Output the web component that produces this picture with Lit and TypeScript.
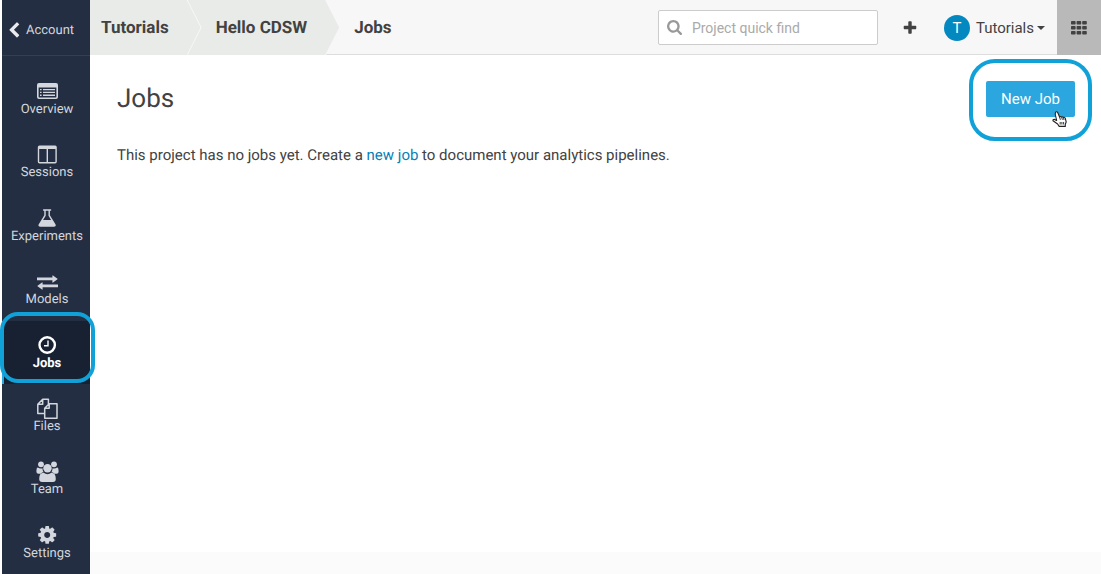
import { LitElement, html, css, svg } from "lit";
import { customElement, property } from "lit/decorators.js";
import { classMap } from "lit/directives/class-map.js";

const COG =
  "M1152 896q0-106-75-181t-181-75-181 75-75 181 75 181 181 75 181-75 75-181zm512-109v222q0 12-8 23t-20 13l-185 28q-19 54-39 91 35 50 107 138 10 12 10 25t-9 23q-27 37-99 108t-94 71q-12 0-26-9l-138-108q-44 23-91 38-16 136-29 186-7 28-36 28h-222q-14 0-24.5-8.5t-11.5-21.5l-28-184q-49-16-90-37l-141 107q-10 9-25 9-14 0-25-11-126-114-165-168-7-10-7-23 0-12 8-23 15-21 51-66.5t54-70.5q-27-50-41-99l-183-27q-13-2-21-12.5t-8-23.5v-222q0-12 8-23t19-13l186-28q14-46 39-92-40-57-107-138-10-12-10-24 0-10 9-23 26-36 98.5-107.5t94.5-71.5q13 0 26 10l138 107q44-23 91-38 16-136 29-186 7-28 36-28h222q14 0 24.5 8.5t11.5 21.5l28 184q49 16 90 37l142-107q9-9 24-9 13 0 25 10 129 119 165 170 7 8 7 22 0 12-8 23-15 21-51 66.5t-54 70.5q26 50 41 98l183 28q13 2 21 12.5t8 23.5z";
const SEARCH =
  "M1216 832q0-185-131.5-316.5t-316.5-131.5-316.5 131.5-131.5 316.5 131.5 316.5 316.5 131.5 316.5-131.5 131.5-316.5zm512 832q0 52-38 90t-90 38q-54 0-90-38l-343-342q-179 124-399 124-143 0-273.5-55.5t-225-150-150-225-55.5-273.5 55.5-273.5 150-225 225-150 273.5-55.5 273.5 55.5 225 150 150 225 55.5 273.5q0 220-124 399l343 343q37 37 37 90z";
const PLUS =
  "M1600 736v192q0 40-28 68t-68 28h-416v416q0 40-28 68t-68 28h-192q-40 0-68-28t-28-68v-416h-416q-40 0-68-28t-28-68v-192q0-40 28-68t68-28h416v-416q0-40 28-68t68-28h192q40 0 68 28t28 68v416h416q40 0 68 28t28 68z";
const CHEVRON =
  "M1427 301l-531 531 531 531q19 19 19 45t-19 45l-166 166q-19 19-45 19t-45-19l-742-742q-19-19-19-45t19-45l742-742q19-19 45-19t45 19l166 166q19 19 19 45t-19 45z";

const icons: Record<string, unknown> = {
  overview: svg`
    <path fill-rule="evenodd" d="M3 3h17q2 0 2 2v12q0 2-2 2H3q-2 0-2-2V5q0-2 2-2zM2.6 7.6v9.2q0 .6.6.6h16.6q.6 0 .6-.6V7.6z"/>
    <path d="M4 8.9h1.6v1.4H4zM7 8.9h12v1.4H7zM4 11.7h1.6v1.4H4zM7 11.7h12v1.4H7zM4 14.5h1.6v1.4H4zM7 14.5h12v1.4H7z"/>`,
  sessions: svg`
    <path fill-rule="evenodd" d="M3.500 2.500h15.600q1.700 0 1.700 1.700v14.600q0 1.700-1.700 1.700H3.500q-1.700 0-1.700-1.700V4.200q0-1.700 1.700-1.700zM3.200 6v12.500q0 .5.5.5h6.900V6zM12 6v13h6.900q.5 0 .5-.5V6z"/>`,
  experiments: svg`
    <path fill-rule="evenodd" d="M7.600 2.300h7q.7 0 .7.700t-.7.700h-.7v4.600l5.400 8.600q.8 1.200.3 2t-1.800.8H4.400q-1.300 0-1.800-.8t.3-2l5.400-8.600V3.700h-.7q-.7 0-.7-.7t.7-.7zM9.700 3.700v5L7.100 13h8l-2.600-4.300v-5z"/>`,
  models: svg`
    <path d="M1 7.600h15.400V5.700q0-.6.600-.3l4.500 3.300q.3.300 0 .6L17 12.600q-.6.300-.6-.3v-2H1zM22 14.600H6.600v-1.900q0-.6-.6-.3l-4.500 3.300q-.3.300 0 .6L6 19.600q.6.300.6-.3v-2H22z"/>`,
  jobs: svg`
    <circle cx="11.200" cy="11" r="7.700" fill="none" stroke="currentColor" stroke-width="2.400"/>
    <path d="M11.300 6.500h1.400v5.900H8V11h3.300z"/>`,
  files: svg`
    <path fill="none" stroke="currentColor" stroke-width="1.500" stroke-linejoin="round"
      d="M8.500 16.600H1.800V7.200l4.900-4.900h5.700v4.200M6.700 2.300v4.900H1.800M8.700 11.300l4.500-4.500h7.800v14.400H8.700zM13.200 6.800v4.500H8.700M12.400 2.300v4.900"/>`,
  team: svg`
    <circle cx="5" cy="4.300" r="2.900"/><circle cx="18" cy="4.300" r="2.900"/><circle cx="11.500" cy="8.300" r="4.200"/>
    <path d="M1.800 7.500q1.500 1 3.200 1 .9 0 1.500-.3-.2 2.300 1 4.100-1.500 0-2.700 1.400H2.500Q.4 13.600.4 11.800q0-4.300 1.400-4.300zM21.200 7.500q-1.500 1-3.200 1-.9 0-1.500-.3.200 2.300-1 4.100 1.500 0 2.700 1.400h2.300q2.100-.1 2.100-1.900 0-4.300-1.400-4.300z"/>
    <path d="M7.600 12.800q1.800 1.400 3.900 1.400t3.900-1.400q4.400 0 4.400 6.200 0 2.900-2.900 2.900H6.100q-2.900 0-2.900-2.900 0-6.200 4.400-6.200z"/>`,
  settings: svg`<path transform="translate(.7 .4) scale(.0117)" d="${COG}"/>`,
};

@customElement("side-nav-item")
class SideNavItem extends LitElement {
  @property() label = "";
  @property() icon = "";
  @property({ type: Boolean, reflect: true }) active = false;

  static styles = css`
    :host {
      display: block;
      flex: 1 0 63px;
      position: relative;
    }
    .link {
      box-sizing: border-box;
      height: 100%;
      padding-top: 13px;
      border-left: 2px solid transparent;
      display: flex;
      flex-direction: column;
      align-items: center;
      color: #d3d6dc;
      font-size: 13px;
      line-height: 16px;
      text-decoration: none;
    }
    .icon {
      width: 22px;
      height: 22px;
      overflow: visible;
      fill: currentColor;
    }
    .active {
      color: #fff;
      font-weight: 700;
      background: #182132;
      border-left-color: #29a7df;
    }
    .ring {
      position: absolute;
      inset: -9px -5px 1px -2px;
      border: 4px solid #0fa1d8;
      border-radius: 18px;
      pointer-events: none;
    }
  `;

  render() {
    return html`
      <a class=${classMap({ link: true, active: this.active })} href="#${this.icon}"
        aria-current=${this.active ? "page" : "false"}>
        <svg class="icon" viewBox="0 0 22 22" aria-hidden="true">${icons[this.icon]}</svg>
        <span>${this.label}</span>
      </a>
      ${this.active ? html`<div class="ring"></div>` : ""}
    `;
  }
}

@customElement("app-root")
class AppRoot extends LitElement {
  private items = ["Overview", "Sessions", "Experiments", "Models", "Jobs", "Files", "Team", "Settings"];

  static styles = css`
    :host {
      box-sizing: border-box;
      display: grid;
      grid-template-columns: 88px 1fr;
      min-height: 100vh;
      padding-left: 2px;
      background: #fff;
      color: #424242;
      font-family: Roboto, "Liberation Sans", sans-serif;
      font-size: 15px;
      text-rendering: geometricPrecision;
    }
    .sidebar {
      display: flex;
      flex-direction: column;
      background: #242e43;
      z-index: 1;
    }
    .account {
      box-sizing: border-box;
      height: 56px;
      padding: 5px 0 0 6px;
      display: flex;
      align-items: center;
      gap: 6px;
      border-bottom: 1px solid #353e52;
      color: #d3d6dc;
      font-size: 13px;
      text-decoration: none;
    }
    .account svg {
      width: 12px;
      height: 16px;
      fill: #e8eaee;
    }
    .nav {
      flex: 1;
      margin-top: 11px;
      display: flex;
      flex-direction: column;
    }
    .page {
      display: flex;
      flex-direction: column;
      min-width: 0;
    }
    .topbar {
      height: 55px;
      display: flex;
      align-items: center;
      background: linear-gradient(#ddd, #ddd) bottom / 100% 1px no-repeat #f7f7f7;
    }
    .crumbs {
      display: flex;
      height: 100%;
      margin: 0;
      padding: 0;
      list-style: none;
      flex: 1;
    }
    .crumb {
      display: flex;
      align-items: center;
      padding: 0 33px 0 28px;
      margin-left: -14px;
      position: relative;
      isolation: isolate;
      font-size: 17px;
      font-weight: 700;
    }
    .crumb:first-child {
      margin-left: 0;
      padding-left: 11px;
      z-index: 1;
    }
    .crumb.step,
    .crumb.step::before {
      clip-path: polygon(0 0, calc(100% - 14px) 0, 100% 50%, calc(100% - 14px) 100%, 0 100%);
    }
    .crumb.step {
      background: #f7f7f7;
    }
    .crumb.step::before {
      content: "";
      position: absolute;
      inset: 0 1px 0 0;
      background: #e9ebe8;
      z-index: -1;
    }
    .crumb a,
    .crumb span {
      color: inherit;
      text-decoration: none;
    }
    .search {
      box-sizing: border-box;
      width: 220px;
      height: 35px;
      display: flex;
      align-items: center;
      gap: 10px;
      padding: 0 8px;
      background: #fff;
      border: 1px solid #ccc;
      border-radius: 2px;
    }
    .search svg {
      width: 15px;
      height: 15px;
      flex: none;
      fill: #999;
    }
    .search input {
      flex: 1;
      min-width: 0;
      border: 0;
      padding: 0;
      outline: 0;
      background: none;
      font: 14px Roboto, sans-serif;
      color: #424242;
    }
    .search input::placeholder {
      color: #aaa;
      opacity: 1;
    }
    button {
      border: 0;
      margin: 0;
      padding: 0;
      background: none;
      font: inherit;
      color: inherit;
      cursor: pointer;
    }
    .add {
      display: flex;
      margin: 0 26px 0 24px;
    }
    .add svg {
      width: 16px;
      height: 16px;
      fill: #424242;
    }
    .user {
      display: flex;
      align-items: center;
    }
    .avatar {
      width: 26px;
      height: 26px;
      margin-right: 6px;
      border-radius: 50%;
      background: #0488c0;
      color: #fff;
      line-height: 26px;
      text-align: center;
    }
    .caret {
      margin-left: 3px;
      border: 4px solid transparent;
      border-top-color: #424242;
      border-bottom: 0;
    }
    .apps {
      width: 44px;
      height: 55px;
      margin-left: 12px;
      display: grid;
      place-items: center;
      background: #b9b9b9;
    }
    .apps svg {
      width: 16px;
      height: 14px;
      fill: #424242;
    }
    .content {
      flex: 1;
      padding: 26px 26px 0 27px;
    }
    .heading {
      display: flex;
      align-items: center;
      justify-content: space-between;
    }
    h1 {
      margin: 0;
      font-size: 26px;
      line-height: 36px;
      font-weight: 400;
    }
    p {
      margin: 28px 0 0;
      line-height: 20px;
    }
    p a {
      color: #0a7fb5;
      text-decoration: none;
    }
    .action {
      position: relative;
    }
    .new {
      height: 36px;
      padding: 0 15px;
      border-radius: 2px;
      background: #2ba6df;
      color: #fff;
    }
    .ring {
      position: absolute;
      inset: -22px -17px -24px;
      border: 4px solid #0fa1d8;
      border-radius: 26px;
      pointer-events: none;
    }
    .pointer {
      position: absolute;
      right: 8px;
      bottom: -11px;
      width: 15px;
      height: 17px;
      pointer-events: none;
    }
    .footer {
      height: 22px;
      background: #fbfbfb;
    }
  `;

  render() {
    return html`
      <aside class="sidebar">
        <a class="account" href="#account">
          <svg viewBox="300 0 1200 1700" aria-hidden="true"><path d=${CHEVRON} /></svg>
          <span>Account</span>
        </a>
        <nav class="nav" aria-label="Project">
          ${this.items.map(
            (label) => html`<side-nav-item label=${label} icon=${label.toLowerCase()}
              ?active=${label === "Jobs"}></side-nav-item>`
          )}
        </nav>
      </aside>
      <div class="page">
        <header class="topbar">
          <ol class="crumbs">
            <li class="crumb step"><a href="#tutorials">Tutorials</a></li>
            <li class="crumb step"><a href="#hello">Hello CDSW</a></li>
            <li class="crumb"><span>Jobs</span></li>
          </ol>
          <label class="search">
            <svg viewBox="64 128 1664 1664" aria-hidden="true"><path d=${SEARCH} /></svg>
            <input type="text" placeholder="Project quick find" aria-label="Project quick find" />
          </label>
          <button class="add" aria-label="Add">
            <svg viewBox="0 0 1792 1792"><path d=${PLUS} /></svg>
          </button>
          <button class="user">
            <span class="avatar">T</span>
            <span>Tutorials</span>
            <span class="caret"></span>
          </button>
          <button class="apps" aria-label="Applications">
            <svg viewBox="0 0 16 14">
              ${[0, 5, 10].map((y) =>
                [0, 5.6, 11.2].map((x) => svg`<rect x=${x} y=${y} width="4.600" height="3.600" rx=".8"/>`)
              )}
            </svg>
          </button>
        </header>
        <main class="content">
          <div class="heading">
            <h1>Jobs</h1>
            <div class="action">
              <button class="new">New Job</button>
              <div class="ring"></div>
              <svg class="pointer" viewBox="0 0 15 17" aria-hidden="true">
                <path fill="#fff" stroke="#222" stroke-width="1.100" stroke-linejoin="round"
                  d="M3.600 1.200q1.200-1 2.100.3L7.600 6q.9-1 1.900.1 1-.7 1.900.4 1.400-.6 1.900.8l.9 3.700-.9 2.200v2.200H7.200L5.600 13 1 9.800Q.6 8.200 2.500 8.400l2.100 1L3.200 3z"/>
                <path fill="none" stroke="#222" stroke-width=".9" d="M7.600 6l.8 2.800M9.700 6.300l.7 2.500M11.500 6.800l.5 2.200M8.200 11v2.500M9.900 11v2.500M11.600 11v2.500"/>
              </svg>
            </div>
          </div>
          <p>This project has no jobs yet. Create a <a href="#new">new job</a> to document your analytics pipelines.</p>
        </main>
        <footer class="footer"></footer>
      </div>
    `;
  }
}
